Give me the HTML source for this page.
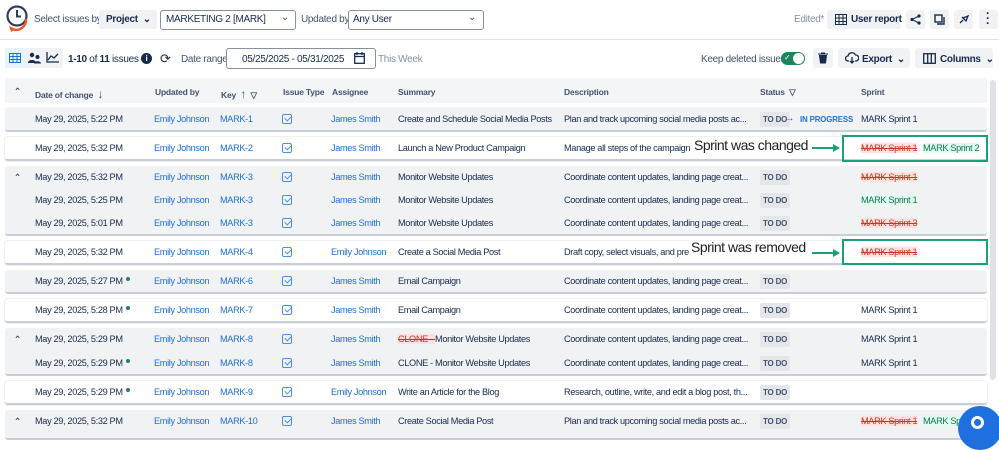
<!DOCTYPE html>
<html><head><meta charset="utf-8"><style>
*{box-sizing:border-box;margin:0;padding:0}
body{width:999px;height:431px;overflow:hidden;background:#fff;font-family:"Liberation Sans",sans-serif;font-size:10px;letter-spacing:-0.3px;color:#172b4d;position:relative}
.a{position:absolute;white-space:nowrap}
.btn{position:absolute;background:#f1f2f4;border-radius:3px}
.dd{position:absolute;border:1px solid #8590a2;border-radius:3px;background:#fff}
.card{position:absolute;left:5px;width:982px;border-bottom:2px solid #c9ced6;border-radius:3px}
.g{background:#f1f2f4}.w{background:#fff;box-shadow:0 0 0 1px #eef0f2}
.b{color:#1f6fd8}
.chk{position:absolute;width:10px;height:10px;border:1.3px solid #4a8ee8;border-radius:2px}
.chk:after{content:"";position:absolute;left:2.5px;top:0px;width:3px;height:5px;border:solid #4a8ee8;border-width:0 1.3px 1.3px 0;transform:rotate(45deg)}
.td{position:absolute;background:#e4e6ea;font-size:8px;font-weight:bold;color:#44546f;padding:3px 3px;border-radius:2px;letter-spacing:-0.2px}
.red{background:#ffe1de;color:#c9372c;text-decoration:line-through}
.grn{background:#dcfff1;color:#216e4e}
.dot{display:inline-block;width:4px;height:4px;border-radius:50%;background:#1f845a;vertical-align:top;margin:1px 0 0 3px}
.hd{font-weight:bold;font-size:8.5px;color:#44546f;letter-spacing:-0.2px}
.ann{position:absolute;font-size:14px;letter-spacing:-0.5px;color:#222;text-shadow:0 0 2px #fff,0 0 2px #fff,0 0 3px #fff,1px 1px 2px #fff}
.box{position:absolute;border:2px solid #1ba07a}
.arr{position:absolute;height:2px;background:#1ba07a}
.arr:after{content:"";position:absolute;right:-6px;top:-3px;border-left:7px solid #1ba07a;border-top:4px solid transparent;border-bottom:4px solid transparent}
#rw{position:absolute;left:0;top:1px;width:999px;height:431px;font-size:9.2px;letter-spacing:-0.35px}
</style></head><body>
<svg class="a" style="left:5px;top:4px" width="26" height="30" viewBox="0 0 26 30"><circle cx="12" cy="12" r="9.5" fill="none" stroke="#2f3d5c" stroke-width="2.2"/><path d="M12 6v6.5h4" fill="none" stroke="#2f3d5c" stroke-width="2"/><path d="M21 15a10 10 0 0 1-14 10" fill="none" stroke="#f05a28" stroke-width="2.4"/><path d="M4 22l2 6 5-3z" fill="#f05a28"/></svg>
<div class="a" style="left:34px;top:14px;color:#44546f">Select issues by:</div>
<div class="btn" style="left:99px;top:10px;width:58px;height:19px"></div>
<div class="a" style="left:106px;top:14px;font-weight:bold">Project&nbsp;&nbsp;⌄</div>
<div class="dd" style="left:160px;top:10px;width:136px;height:20px"></div>
<div class="a" style="left:166px;top:14px">MARKETING 2 [MARK]</div>
<div class="a" style="left:281px;top:12px;color:#44546f">⌄</div>
<div class="a" style="left:301px;top:14px;color:#44546f">Updated by:</div>
<div class="dd" style="left:348px;top:10px;width:136px;height:20px"></div>
<div class="a" style="left:353px;top:14px">Any User</div>
<div class="a" style="left:468px;top:12px;color:#44546f">⌄</div>
<div class="a" style="left:794px;top:14px;color:#8590a2">Edited*</div>
<div class="btn" style="left:827px;top:10px;width:74px;height:19px"></div>
<svg class="a" style="left:835px;top:14px" width="12" height="11"><rect x=".5" y=".5" width="11" height="10" fill="none" stroke="#172b4d"/><path d="M0 4h12M0 7.5h12M4 0v11M8 0v11" stroke="#172b4d"/></svg>
<div class="a" style="left:851px;top:14px;font-weight:bold">User report</div>
<div class="btn" style="left:906px;top:10px;width:19px;height:19px"></div>
<svg class="a" style="left:910px;top:14px" width="11" height="11"><circle cx="2" cy="5.5" r="1.6" fill="#172b4d"/><circle cx="9" cy="2" r="1.6" fill="#172b4d"/><circle cx="9" cy="9" r="1.6" fill="#172b4d"/><path d="M2 5.5L9 2M2 5.5L9 9" stroke="#172b4d"/></svg>
<div class="btn" style="left:930px;top:10px;width:19px;height:19px"></div>
<svg class="a" style="left:934px;top:14px" width="11" height="11"><rect x="1" y="1" width="7" height="7" fill="none" stroke="#172b4d" stroke-width="1.4"/><path d="M10 3v7H3" fill="none" stroke="#172b4d" stroke-width="1.4"/></svg>
<div class="btn" style="left:954px;top:10px;width:19px;height:19px"></div>
<svg class="a" style="left:958px;top:14px" width="11" height="11"><path d="M2 9l3-3M4 3l4 4 2-5-5 2z" fill="none" stroke="#172b4d" stroke-width="1.3"/></svg>
<div class="btn" style="left:979px;top:10px;width:19px;height:19px"></div>
<div class="a" style="left:986px;top:11px;font-weight:bold;font-size:12px;line-height:5px">·<br>·<br>·</div>
<div class="a" style="left:0;top:39px;width:999px;height:1px;background:#e2e4e8"></div>
<div class="btn" style="left:5px;top:48px;width:58px;height:20px"></div>
<div class="a" style="left:5px;top:48px;width:20px;height:20px;background:#e9f2ff"></div>
<svg class="a" style="left:9px;top:53px" width="12" height="10"><rect x=".5" y=".5" width="11" height="9" fill="none" stroke="#1f6fd8"/><path d="M0 3.5h12M0 6.5h12M4 0v10M8 0v10" stroke="#1f6fd8"/></svg>
<svg class="a" style="left:28px;top:52px" width="13" height="12"><circle cx="4" cy="3" r="2.2" fill="#172b4d"/><circle cx="9.5" cy="5" r="2" fill="#172b4d"/><path d="M0 11c0-4 8-4 8 0zM6 11.5c0-3 7-3 7 0z" fill="#172b4d"/></svg>
<svg class="a" style="left:46px;top:52px" width="13" height="11"><path d="M1 0v10h12M2 8l3-4 3 2 4-4" fill="none" stroke="#172b4d" stroke-width="1.3"/></svg>
<div class="a" style="left:68px;top:54px"><b>1-10</b> of <b>11</b> issues</div>
<div class="a" style="left:141px;top:53px;width:11px;height:11px;border-radius:50%;background:#172b4d;color:#fff;font-size:8px;text-align:center;font-weight:bold;line-height:11px">i</div>
<div class="a" style="left:160px;top:51px;font-size:13px">⟳</div>
<div class="a" style="left:181px;top:54px;color:#44546f">Date range:</div>
<div class="dd" style="left:226px;top:48px;width:150px;height:21px"></div>
<div class="a" style="left:242px;top:54px">05/25/2025 - 05/31/2025</div>
<svg class="a" style="left:354px;top:52px" width="11" height="12"><rect x=".7" y="1.7" width="9.6" height="9.6" fill="none" stroke="#172b4d" stroke-width="1.3"/><path d="M1 4.5h9M3 0v3M8 0v3" stroke="#172b4d" stroke-width="1.3"/></svg>
<div class="a" style="left:378px;top:54px;color:#8590a2">This Week</div>
<div class="a" style="left:701px;top:54px;color:#44546f">Keep deleted issues</div>
<div class="a" style="left:781px;top:52px;width:24px;height:13px;border-radius:7px;background:#1f845a"></div>
<div class="a" style="left:793px;top:53px;width:11px;height:11px;border-radius:50%;background:#fff"></div>
<div class="a" style="left:784px;top:53px;color:#fff;font-size:8px">✓</div>
<div class="btn" style="left:813px;top:48px;width:20px;height:20px"></div>
<svg class="a" style="left:818px;top:52px" width="10" height="12"><path d="M0 2h10M3 1h4M1.5 3.5h7l-1 7.5h-5z" fill="#172b4d" stroke="#172b4d"/></svg>
<div class="btn" style="left:838px;top:48px;width:72px;height:20px"></div>
<svg class="a" style="left:845px;top:52px" width="14" height="12"><path d="M4 9H3a2.5 2.5 0 0 1 0-5 4 4 0 0 1 7.5-1A3 3 0 0 1 11 9h-1M7 5v6M5 9l2 2 2-2" fill="none" stroke="#172b4d" stroke-width="1.3"/></svg>
<div class="a" style="left:862px;top:54px;font-weight:bold">Export&nbsp;&nbsp;⌄</div>
<div class="btn" style="left:915px;top:48px;width:78px;height:20px"></div>
<svg class="a" style="left:923px;top:53px" width="13" height="11"><rect x=".7" y=".7" width="11.6" height="9.6" fill="none" stroke="#172b4d" stroke-width="1.3"/><path d="M4.7 0v11M8.3 0v11" stroke="#172b4d" stroke-width="1.3"/></svg>
<div class="a" style="left:940px;top:54px;font-weight:bold">Columns&nbsp;&nbsp;⌄</div>
<div class="a" style="left:5px;top:78px;width:982px;height:25px;background:#f4f5f7"></div>
<div class="a" style="left:990px;top:80px;width:6px;height:300px;background:#dfe1e6;border-radius:3px"></div>
<div class="a hd" style="left:14px;top:86px">⌃</div>
<div class="a hd" style="left:35px;top:87px">Date of change &nbsp;<span style="font-size:12px">↓</span></div>
<div class="a hd" style="left:155px;top:87px">Updated by</div>
<div class="a hd" style="left:221px;top:87px">Key &nbsp;<span style="font-size:12px">↑</span>&nbsp; ▽</div>
<div class="a hd" style="left:283px;top:87px">Issue Type</div>
<div class="a hd" style="left:332px;top:87px">Assignee</div>
<div class="a hd" style="left:398px;top:87px">Summary</div>
<div class="a hd" style="left:564px;top:87px">Description</div>
<div class="a hd" style="left:760px;top:87px">Status &nbsp;▽</div>
<div class="a hd" style="left:861px;top:87px">Sprint</div>
<div class="card g" style="top:107px;height:25px"></div>
<div class="card w" style="top:137px;height:24px"></div>
<div class="card g" style="top:166px;height:70px"></div>
<div class="card w" style="top:241px;height:24px"></div>
<div class="card g" style="top:270px;height:24px"></div>
<div class="card w" style="top:299px;height:24px"></div>
<div class="card g" style="top:328px;height:48px"></div>
<div class="card w" style="top:381px;height:24px"></div>
<div class="card g" style="top:410px;height:30px"></div>
<div id="rw">
<div class="a" style="left:35px;top:113px">May 29, 2025, 5:22 PM</div><div class="a b" style="left:154px;top:113px">Emily Johnson</div><div class="a b" style="left:220px;top:113px">MARK-1</div><div class="chk" style="left:282px;top:113px"></div><div class="a b" style="left:331px;top:113px">James Smith</div><div class="a" style="left:398px;top:113px">Create and Schedule Social Media Posts</div><div class="a" style="left:564px;top:113px">Plan and track upcoming social media posts ac...</div><div class="td" style="left:760px;top:111px">TO DO</div><div class="a" style="left:785px;top:112px;color:#44546f">→</div><div class="a" style="left:800px;top:114px;font-size:7.8px;font-weight:bold;color:#1f6fd8;letter-spacing:-0.1px">IN PROGRESS</div><div class="a" style="left:861px;top:113px">MARK Sprint 1</div>
<div class="a" style="left:35px;top:142px">May 29, 2025, 5:32 PM</div><div class="a b" style="left:154px;top:142px">Emily Johnson</div><div class="a b" style="left:220px;top:142px">MARK-2</div><div class="chk" style="left:282px;top:142px"></div><div class="a b" style="left:331px;top:142px">James Smith</div><div class="a" style="left:398px;top:142px">Launch a New Product Campaign</div><div class="a" style="left:564px;top:142px">Manage all steps of the campaign</div><div class="a red" style="left:861px;top:142px">MARK Sprint 1</div><div class="a grn" style="left:923px;top:142px">MARK Sprint 2</div>
<div class="a hd" style="left:14px;top:171px">⌃</div>
<div class="a" style="left:35px;top:171px">May 29, 2025, 5:32 PM</div><div class="a b" style="left:154px;top:171px">Emily Johnson</div><div class="a b" style="left:220px;top:171px">MARK-3</div><div class="chk" style="left:282px;top:171px"></div><div class="a b" style="left:331px;top:171px">James Smith</div><div class="a" style="left:398px;top:171px">Monitor Website Updates</div><div class="a" style="left:564px;top:171px">Coordinate content updates, landing page creat...</div><div class="td" style="left:760px;top:169px">TO DO</div><div class="a red" style="left:861px;top:171px">MARK Sprint 1</div>
<div class="a" style="left:35px;top:194px">May 29, 2025, 5:25 PM</div><div class="a b" style="left:154px;top:194px">Emily Johnson</div><div class="a b" style="left:220px;top:194px">MARK-3</div><div class="chk" style="left:282px;top:194px"></div><div class="a b" style="left:331px;top:194px">James Smith</div><div class="a" style="left:398px;top:194px">Monitor Website Updates</div><div class="a" style="left:564px;top:194px">Coordinate content updates, landing page creat...</div><div class="td" style="left:760px;top:192px">TO DO</div><div class="a grn" style="left:861px;top:194px">MARK Sprint 1</div>
<div class="a" style="left:35px;top:217px">May 29, 2025, 5:01 PM</div><div class="a b" style="left:154px;top:217px">Emily Johnson</div><div class="a b" style="left:220px;top:217px">MARK-3</div><div class="chk" style="left:282px;top:217px"></div><div class="a b" style="left:331px;top:217px">James Smith</div><div class="a" style="left:398px;top:217px">Monitor Website Updates</div><div class="a" style="left:564px;top:217px">Coordinate content updates, landing page creat...</div><div class="td" style="left:760px;top:215px">TO DO</div><div class="a red" style="left:861px;top:217px">MARK Sprint 3</div>
<div class="a" style="left:35px;top:246px">May 29, 2025, 5:32 PM</div><div class="a b" style="left:154px;top:246px">Emily Johnson</div><div class="a b" style="left:220px;top:246px">MARK-4</div><div class="chk" style="left:282px;top:246px"></div><div class="a b" style="left:331px;top:246px">Emily Johnson</div><div class="a" style="left:398px;top:246px">Create a Social Media Post</div><div class="a" style="left:564px;top:246px">Draft copy, select visuals, and pre</div><div class="a red" style="left:861px;top:246px">MARK Sprint 1</div>
<div class="a" style="left:35px;top:275px">May 29, 2025, 5:27 PM<span class="dot"></span></div><div class="a b" style="left:154px;top:275px">Emily Johnson</div><div class="a b" style="left:220px;top:275px">MARK-6</div><div class="chk" style="left:282px;top:275px"></div><div class="a b" style="left:331px;top:275px">James Smith</div><div class="a" style="left:398px;top:275px">Email Campaign</div><div class="a" style="left:564px;top:275px">Coordinate content updates, landing page creat...</div><div class="td" style="left:760px;top:273px">TO DO</div>
<div class="a" style="left:35px;top:304px">May 29, 2025, 5:28 PM<span class="dot"></span></div><div class="a b" style="left:154px;top:304px">Emily Johnson</div><div class="a b" style="left:220px;top:304px">MARK-7</div><div class="chk" style="left:282px;top:304px"></div><div class="a b" style="left:331px;top:304px">James Smith</div><div class="a" style="left:398px;top:304px">Email Campaign</div><div class="a" style="left:564px;top:304px">Coordinate content updates, landing page creat...</div><div class="td" style="left:760px;top:302px">TO DO</div><div class="a" style="left:861px;top:304px">MARK Sprint 1</div>
<div class="a hd" style="left:14px;top:333px">⌃</div>
<div class="a" style="left:35px;top:333px">May 29, 2025, 5:29 PM</div><div class="a b" style="left:154px;top:333px">Emily Johnson</div><div class="a b" style="left:220px;top:333px">MARK-8</div><div class="chk" style="left:282px;top:333px"></div><div class="a b" style="left:331px;top:333px">James Smith</div><div class="a" style="left:398px;top:333px"><span class="red">CLONE - </span>Monitor Website Updates</div><div class="a" style="left:564px;top:333px">Coordinate content updates, landing page creat...</div><div class="td" style="left:760px;top:331px">TO DO</div><div class="a" style="left:861px;top:333px">MARK Sprint 1</div>
<div class="a" style="left:35px;top:357px">May 29, 2025, 5:29 PM<span class="dot"></span></div><div class="a b" style="left:154px;top:357px">Emily Johnson</div><div class="a b" style="left:220px;top:357px">MARK-8</div><div class="chk" style="left:282px;top:357px"></div><div class="a b" style="left:331px;top:357px">James Smith</div><div class="a" style="left:398px;top:357px">CLONE - Monitor Website Updates</div><div class="a" style="left:564px;top:357px">Coordinate content updates, landing page creat...</div><div class="td" style="left:760px;top:355px">TO DO</div><div class="a" style="left:861px;top:357px">MARK Sprint 1</div>
<div class="a" style="left:35px;top:386px">May 29, 2025, 5:29 PM<span class="dot"></span></div><div class="a b" style="left:154px;top:386px">Emily Johnson</div><div class="a b" style="left:220px;top:386px">MARK-9</div><div class="chk" style="left:282px;top:386px"></div><div class="a b" style="left:331px;top:386px">Emily Johnson</div><div class="a" style="left:398px;top:386px">Write an Article for the Blog</div><div class="a" style="left:564px;top:386px">Research, outline, write, and edit a blog post, th...</div><div class="td" style="left:760px;top:384px">TO DO</div>
<div class="a hd" style="left:14px;top:415px">⌃</div>
<div class="a" style="left:35px;top:415px">May 29, 2025, 5:32 PM</div><div class="a b" style="left:154px;top:415px">Emily Johnson</div><div class="a b" style="left:220px;top:415px">MARK-10</div><div class="chk" style="left:282px;top:415px"></div><div class="a b" style="left:331px;top:415px">James Smith</div><div class="a" style="left:398px;top:415px">Create Social Media Post</div><div class="a" style="left:564px;top:415px">Plan and track upcoming social media posts ac...</div><div class="td" style="left:760px;top:413px">TO DO</div><div class="a red" style="left:861px;top:415px">MARK Sprint 1</div><div class="a grn" style="left:923px;top:415px">MARK Sp</div>
</div>
<div class="ann" style="left:694px;top:137px">Sprint was changed</div>
<div class="arr" style="left:812px;top:147px;width:22px"></div>
<div class="box" style="left:842px;top:135px;width:146px;height:27px"></div>
<div class="ann" style="left:691px;top:239px">Sprint was removed</div>
<div class="arr" style="left:812px;top:252px;width:22px"></div>
<div class="box" style="left:842px;top:239px;width:146px;height:26px"></div>
<div class="a" style="left:958px;top:406px;width:44px;height:44px;border-radius:50%;background:#1e6fe0"></div>
<div class="a" style="left:971px;top:416px;width:13px;height:13px;border-radius:50%;border:3px solid #fff"></div>
</body></html>
